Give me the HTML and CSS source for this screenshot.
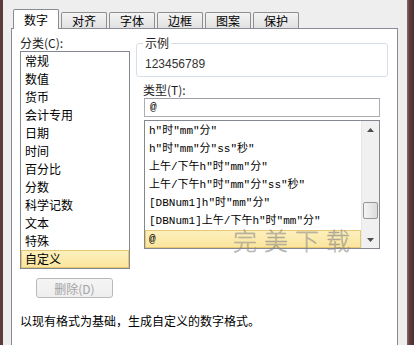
FILE: index.html
```html
<!DOCTYPE html>
<html lang="zh-CN">
<head>
    <meta charset="UTF-8">
    <meta name="viewport" content="width=device-width, initial-scale=1.0">
    <title>设置单元格格式</title>
    <link rel="stylesheet" href="styles.css">
</head>
<body>
    <div class="window">
        <div class="edge-left"></div>
        <div class="dialog">
            <div class="tabs">
                <div class="tab active">数字</div>
                <div class="tab">对齐</div>
                <div class="tab">字体</div>
                <div class="tab">边框</div>
                <div class="tab">图案</div>
                <div class="tab">保护</div>
            </div>
            <div class="panel">
                <div class="columns">
                    <div class="col-left">
                        <div class="label">分类(C):</div>
                        <ul class="category-list">
                            <li>常规</li>
                            <li>数值</li>
                            <li>货币</li>
                            <li>会计专用</li>
                            <li>日期</li>
                            <li>时间</li>
                            <li>百分比</li>
                            <li>分数</li>
                            <li>科学记数</li>
                            <li>文本</li>
                            <li>特殊</li>
                            <li class="selected">自定义</li>
                        </ul>
                        <button class="btn" disabled>删除(D)</button>
                    </div>
                    <div class="col-right">
                        <fieldset class="sample">
                            <legend>示例</legend>
                            <div class="sample-value">123456789</div>
                        </fieldset>
                        <div class="label type-label">类型(T):</div>
                        <div class="type-input">@</div>
                        <div class="format-list">
                            <ul class="formats">
                                <li>h"时"mm"分"</li>
                                <li>h"时"mm"分"ss"秒"</li>
                                <li>上午/下午h"时"mm"分"</li>
                                <li>上午/下午h"时"mm"分"ss"秒"</li>
                                <li>[DBNum1]h"时"mm"分"</li>
                                <li>[DBNum1]上午/下午h"时"mm"分"</li>
                                <li class="selected">@</li>
                            </ul>
                            <div class="scrollbar">
                                <div class="arrow">
                                    <svg width="7" height="4" viewBox="0 0 7 4"><path d="M0 4 L3.5 0 L7 4 Z" fill="#4d4d4d"/></svg>
                                </div>
                                <div class="track">
                                    <div class="thumb"></div>
                                </div>
                                <div class="arrow">
                                    <svg width="7" height="4" viewBox="0 0 7 4"><path d="M0 0 L3.5 4 L7 0 Z" fill="#4d4d4d"/></svg>
                                </div>
                            </div>
                            <div class="watermark">完美下载</div>
                        </div>
                    </div>
                </div>
                <p class="hint">以现有格式为基础，生成自定义的数字格式。</p>
            </div>
        </div>
        <div class="edge-right"></div>
    </div>
</body>
</html>
```

FILE: styles.css
```css
body {
    margin: 0;
    font-family: "Noto Sans CJK SC", "Noto Sans", sans-serif;
    font-size: 12px;
    color: #000;
    background-color: #f0f0f0;
}
.window {
    display: flex;
    height: 345px;
    overflow: hidden;
}
.edge-left {
    width: 3px;
    background-color: #5c3b3b;
}
.edge-right {
    width: 7px;
    background: linear-gradient(to right, #8a6a6a, #5c3b3b 40%, #4f3030);
}
.dialog {
    flex: 1;
    display: flex;
    flex-direction: column;
    padding: 10px 9px 0 8px;
    background-color: #efeeee;
}
.tabs {
    display: flex;
    align-items: flex-end;
    gap: 2px;
    padding-left: 2px;
    height: 18px;
    position: relative;
    z-index: 1;
}
.tab {
    width: 44px;
    height: 15px;
    line-height: 15px;
    text-align: center;
    border: 1px solid #8e8f8f;
    border-bottom: none;
    border-radius: 2px 2px 0 0;
    background: linear-gradient(#f3f3f3, #e1e1e1);
}
.tab.active {
    height: 19px;
    line-height: 19px;
    margin-bottom: -1px;
    background: #fff;
    border-color: #898c95;
}
.panel {
    flex: 1;
    background-color: #fff;
    border: 1px solid #898c95;
    border-bottom: none;
    padding: 0 8px;
}
.columns {
    display: flex;
    gap: 6px;
}
.col-left {
    width: 110px;
}
.col-right {
    width: 252px;
}
.label {
    margin-top: 6px;
    height: 16px;
    line-height: 16px;
    color: #1e1e1e;
}
.category-list {
    list-style: none;
    margin: 0;
    padding: 0;
    height: 216px;
    border: 1px solid #828790;
}
.category-list li {
    height: 18px;
    line-height: 18px;
    padding-left: 4px;
}
.category-list li.selected,
.formats li.selected {
    background: linear-gradient(#fdf0bf, #fbe59c);
    outline: 1px solid #e6c873;
    outline-offset: -1px;
}
.btn {
    display: block;
    margin: 9px 0 0 16px;
    width: 77px;
    height: 20px;
    padding: 0;
    font-family: inherit;
    font-size: 12px;
    color: #a3a3a3;
    background: linear-gradient(#f5f5f5, #eeeeee);
    border: 1px solid #b9b9b9;
    border-radius: 3px;
}
.sample {
    margin: 6px 0 0;
    padding: 5px 8px 4px;
    border: 1px solid #d8dfe4;
    border-radius: 3px;
}
.sample legend {
    padding: 0 2px;
    margin-left: -2px;
    line-height: 16px;
    color: #1e1e1e;
}
.sample-value {
    line-height: 16px;
    font-family: "Liberation Sans", "Noto Sans", sans-serif;
    color: #333;
}
.type-label {
    margin: 5px 0 0 7px;
}
.type-input {
    margin-left: 8px;
    width: 229px;
    height: 17px;
    line-height: 17px;
    padding-left: 5px;
    border: 1px solid #abadb3;
    border-top-color: #9da0a8;
    font-family: "Liberation Mono", monospace;
    font-size: 11px;
}
.format-list {
    position: relative;
    display: flex;
    margin: 3px 0 0 8px;
    width: 234px;
    height: 127px;
    border: 1px solid #828790;
}
.formats {
    flex: 1;
    list-style: none;
    margin: 0;
    padding: 1px 0 0;
}
.formats li {
    height: 18px;
    line-height: 18px;
    padding-left: 4px;
    font-family: "Liberation Mono", "Noto Sans CJK SC", monospace;
    font-size: 11px;
    white-space: nowrap;
}
.scrollbar {
    width: 17px;
    display: flex;
    flex-direction: column;
    background-color: #f0f0f0;
    border-left: 1px solid #e6e6e6;
}
.arrow {
    height: 17px;
    display: flex;
    align-items: center;
    justify-content: center;
}
.track {
    flex: 1;
}
.thumb {
    margin: 64px 0 0 1px;
    width: 13px;
    height: 15px;
    border: 1px solid #969696;
    border-radius: 2px;
    background: linear-gradient(to right, #f4f4f4, #dcdcdc);
}
.watermark {
    position: absolute;
    left: 88px;
    top: 106px;
    font-size: 24px;
    font-weight: 300;
    letter-spacing: 7px;
    line-height: 26px;
    color: rgba(150, 150, 150, 0.55);
    -webkit-text-stroke: 0.4px rgba(120, 120, 120, 0.6);
    pointer-events: none;
}
.hint {
    margin: 15px 0 0;
    line-height: 16px;
}
```
